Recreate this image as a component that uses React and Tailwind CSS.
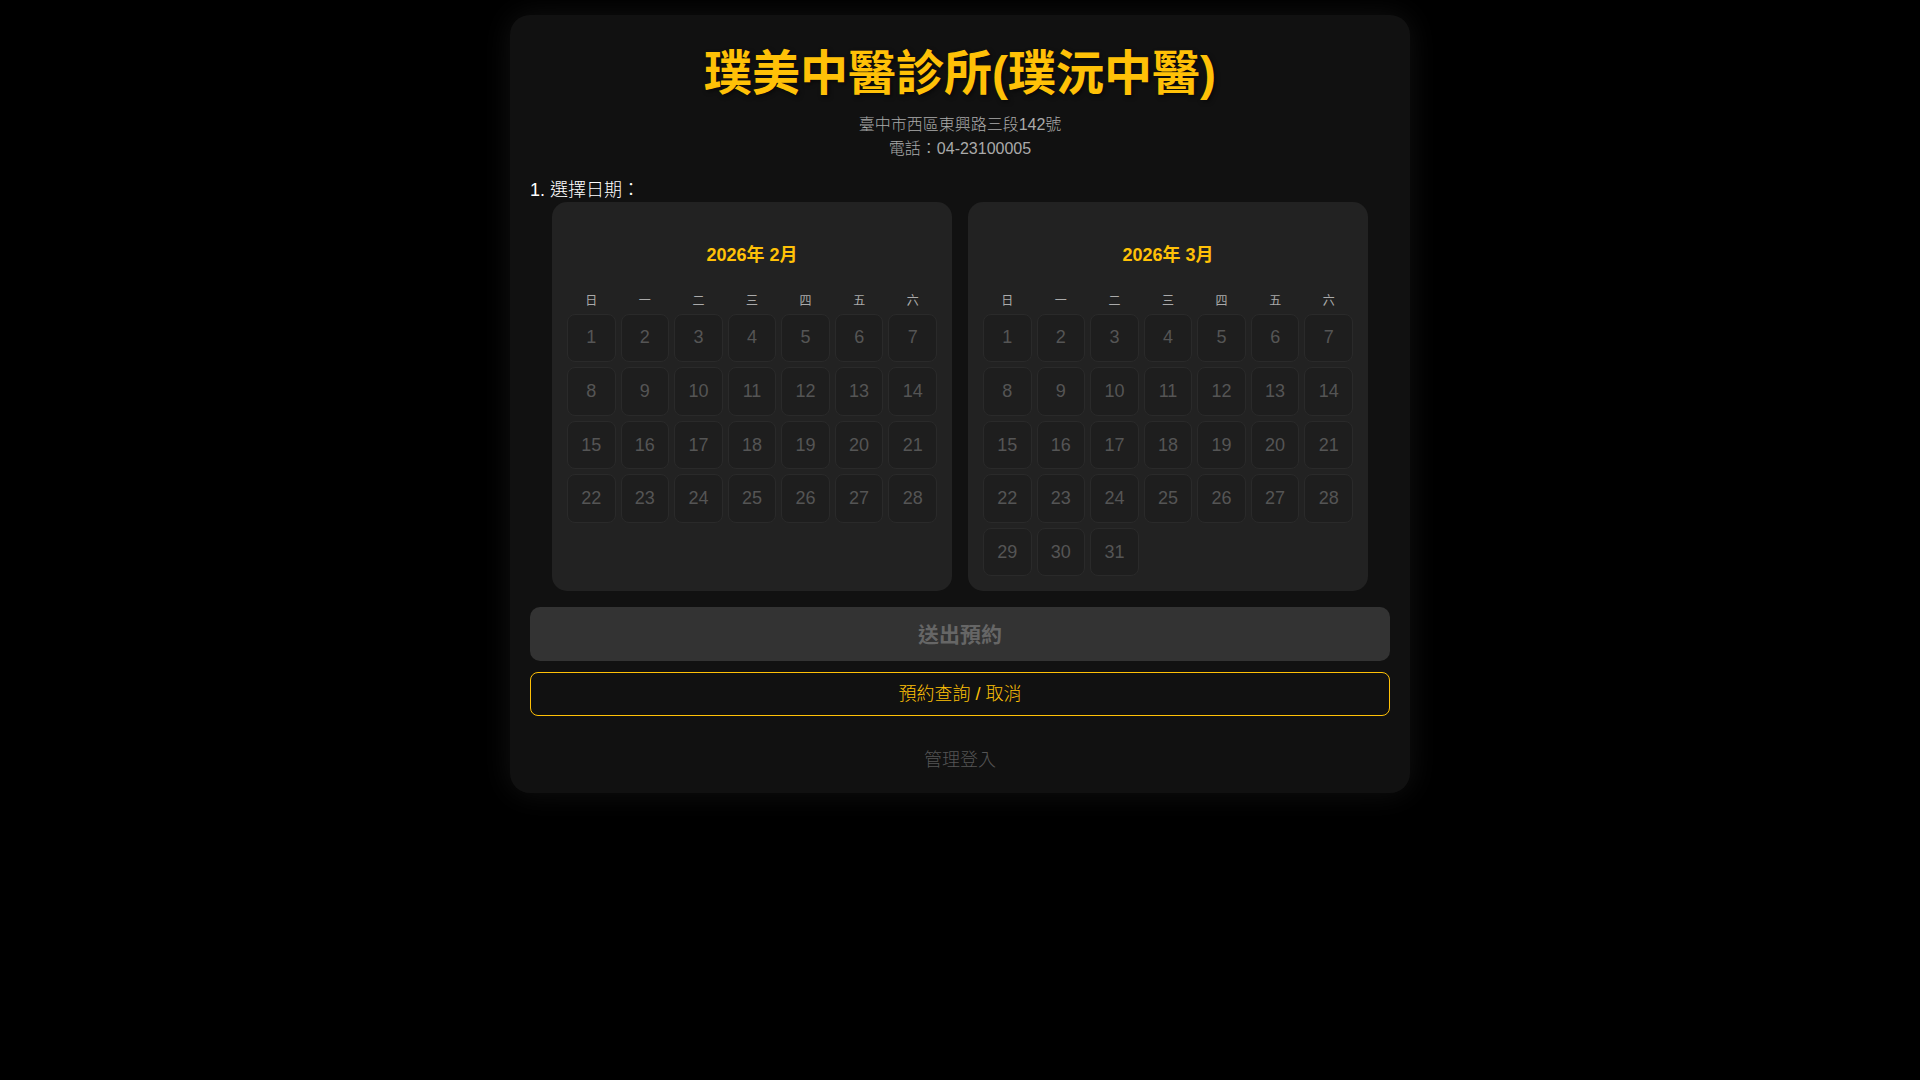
import React from 'react';

const WEEKDAYS = ['日', '一', '二', '三', '四', '五', '六'];

const MONTHS = [
  { label: '2026年 2月', offset: 0, days: 28 },
  { label: '2026年 3月', offset: 0, days: 31 },
];

function Calendar({ month }) {
  const blanks = Array.from({ length: month.offset });
  const days = Array.from({ length: month.days }, (_, i) => i + 1);

  return (
    <div className="w-[400px] rounded-[15px] bg-[#222] p-[15px]">
      <div className="pt-[25px] pb-[24px] text-center text-[18px] leading-[27px] font-bold text-[#ffc107]">
        {month.label}
      </div>
      <div className="grid grid-cols-7 gap-[5px]">
        {WEEKDAYS.map((w) => (
          <div key={w} className="text-center text-[12px] leading-[16px] text-[#aaa]">
            {w}
          </div>
        ))}
        {blanks.map((_, i) => (
          <div key={'b' + i} />
        ))}
        {days.map((d) => (
          <div
            key={d}
            className="flex aspect-square items-center justify-center rounded-[8px] border border-[#2a2a2a] bg-[#1e1e1e] text-[18px] text-[#555]"
          >
            {d}
          </div>
        ))}
      </div>
    </div>
  );
}

export default function App() {
  return (
    <div className="min-h-screen bg-black pt-[15px] font-['Liberation_Sans','Noto_Sans_CJK_TC',sans-serif]">
      <div className="mx-auto w-[900px] rounded-[20px] bg-[#111] px-[20px] pt-[20px] pb-[19px] shadow-[0_0_30px_rgba(255,255,255,0.07)]">
        <h1 className="mt-[10px] text-center text-[48px] leading-[1.2] font-bold text-[#ffc107] [text-shadow:2px_2px_4px_rgba(0,0,0,0.5)]">
          璞美中醫診所(璞沅中醫)
        </h1>
        <p className="mt-[10px] text-center text-[16px] leading-[24px] font-light text-[#aaa]">臺中市西區東興路三段142號</p>
        <p className="text-center text-[16px] leading-[24px] font-light text-[#aaa]">電話：04-23100005</p>

        <div className="mt-[17px] text-[18px] leading-[24px] font-light text-white">1. 選擇日期：</div>

        <div className="flex justify-center gap-[16px]">
          {MONTHS.map((m) => (
            <Calendar key={m.label} month={m} />
          ))}
        </div>

        <button
          disabled
          className="mt-[16px] h-[54px] w-full rounded-[10px] bg-[#333] text-[21px] font-bold text-[#666]"
        >
          送出預約
        </button>
        <button className="mt-[11px] h-[44px] w-full rounded-[8px] border border-[#ffc107] bg-transparent text-[18px] font-light text-[#ffc107]">
          預約查詢 / 取消
        </button>

        <div className="mt-[31px] text-center text-[18px] leading-[27px] font-light text-[#555]">管理登入</div>
      </div>
    </div>
  );
}
